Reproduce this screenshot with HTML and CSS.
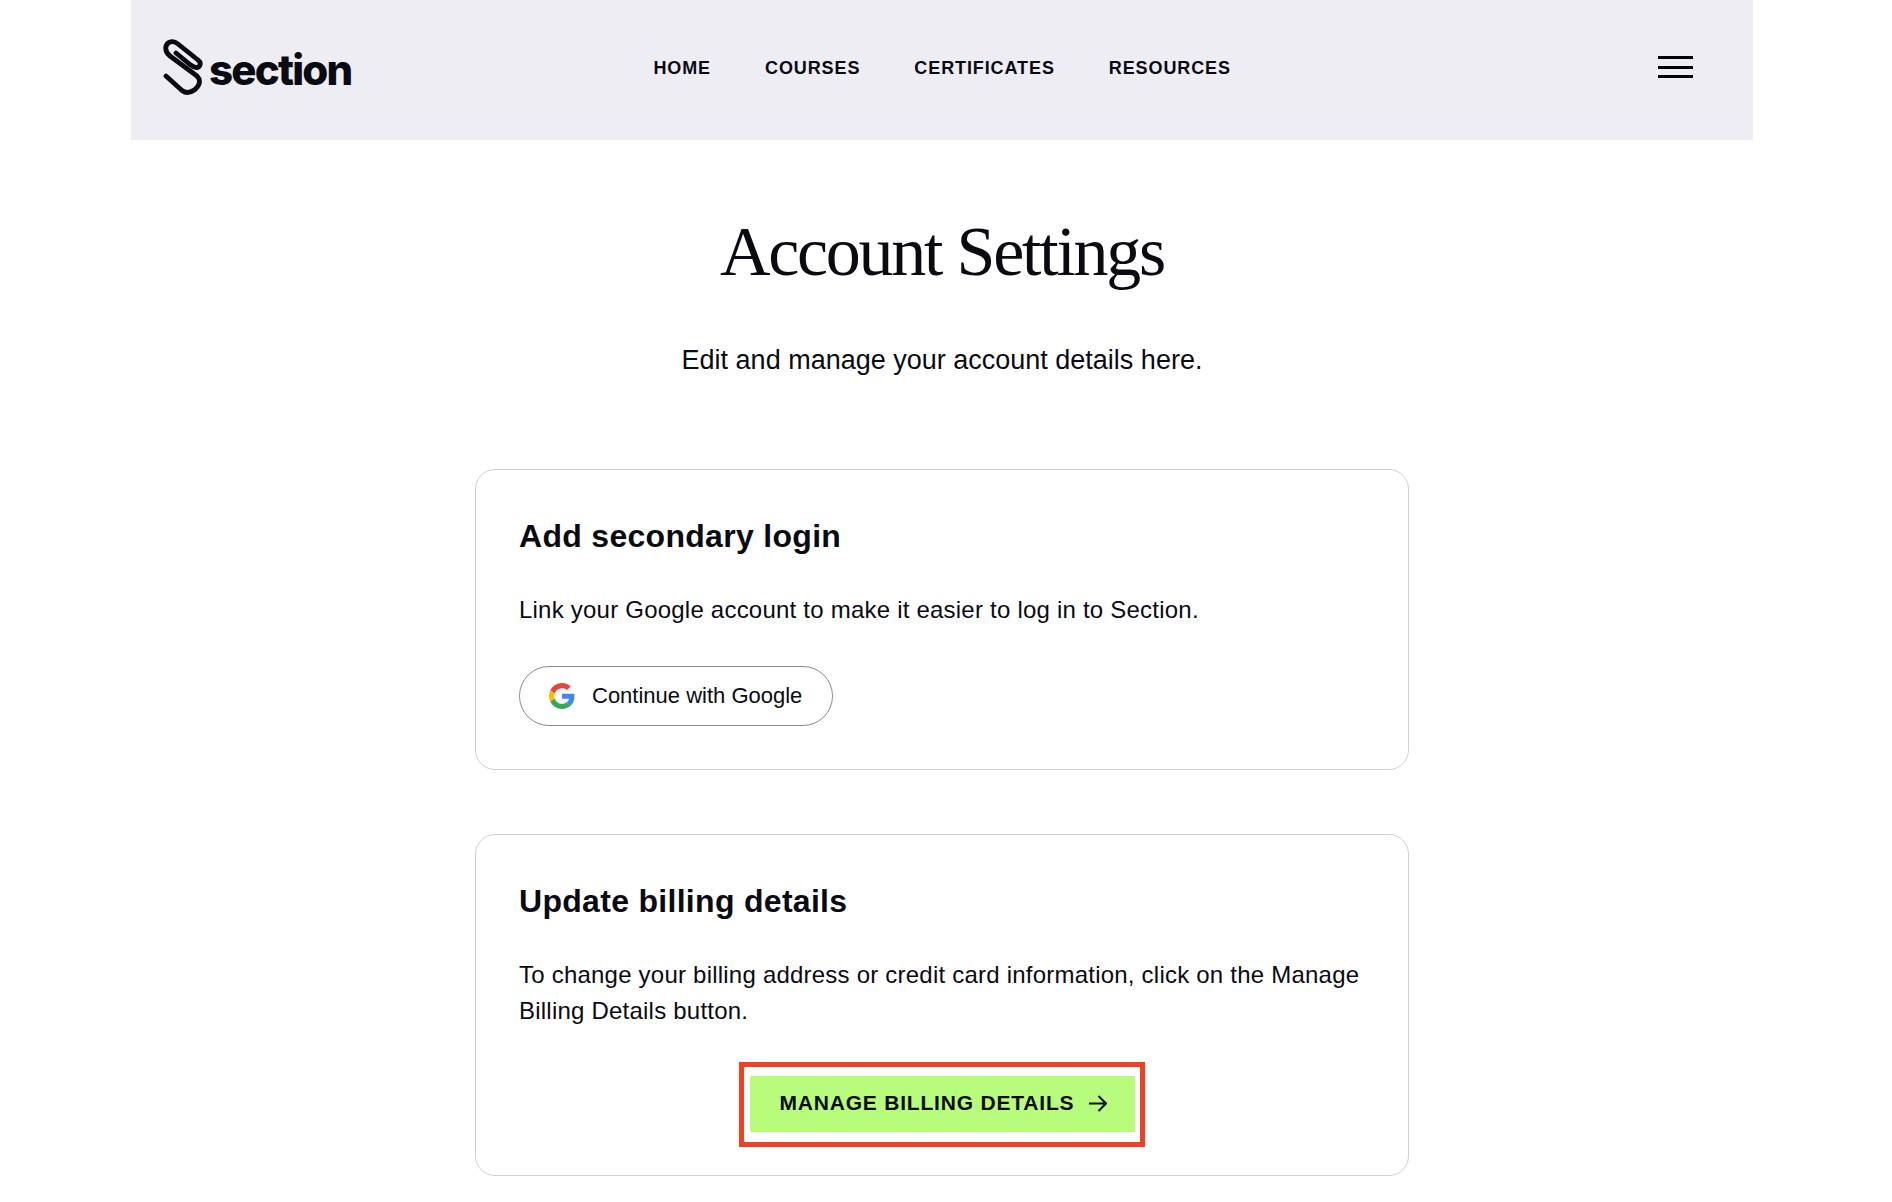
FILE: index.html

```html
<!DOCTYPE html>
<html lang="en">
<head>
  <meta charset="UTF-8">
  <title>Account Settings</title>
  <link rel="stylesheet" href="styles.css">
</head>
<body>

<div class="page">
  <header class="topbar">
    <a class="logo" href="#">
      <svg class="logo-clip" viewBox="6 6 41 58" width="41" height="58" fill="none" stroke="#0a0a12" stroke-width="4.800" stroke-linecap="round" stroke-linejoin="round">
        <path d="M10 44 L26 58.500 C30 61.500 35 60.500 39 57.500 C44 53 45 48 41 44 L14 24 C8 19.500 9 12.500 13 10.500 C16 9 19 9.500 22 12 L42 28 C46 31 44 36 40 35.500 C38 35 36 34 34 32.500 L20 21"/>
      </svg>
      <span class="logo-text">section</span>
    </a>
    <nav class="nav">
      <a href="#">HOME</a>
      <a href="#">COURSES</a>
      <a href="#">CERTIFICATES</a>
      <a href="#">RESOURCES</a>
    </nav>
    <div class="burger"><span></span><span></span><span></span></div>
  </header>

  <main class="content">
    <h1>Account Settings</h1>
    <p class="lead">Edit and manage your account details here.</p>

    <section class="card card-login">
      <h2>Add secondary login</h2>
      <p>Link your Google account to make it easier to log in to Section.</p>
      <button class="google-btn">
        <svg viewBox="0 0 48 48" width="26" height="26">
          <path fill="#EA4335" d="M24 9.500c3.540 0 6.710 1.220 9.210 3.600l6.850-6.850C35.900 2.380 30.470 0 24 0 14.620 0 6.510 5.380 2.560 13.220l7.980 6.190C12.430 13.720 17.740 9.500 24 9.500z"/>
          <path fill="#4285F4" d="M46.980 24.550c0-1.570-.15-3.090-.38-4.550H24v9.020h12.940c-.58 2.960-2.260 5.480-4.780 7.180l7.730 6c4.510-4.180 7.090-10.360 7.090-17.650z"/>
          <path fill="#FBBC05" d="M10.530 28.590c-.48-1.450-.76-2.990-.76-4.590s.27-3.140.76-4.590l-7.980-6.190C.92 16.460 0 20.120 0 24c0 3.880.92 7.540 2.560 10.780l7.970-6.190z"/>
          <path fill="#34A853" d="M24 48c6.480 0 11.930-2.130 15.890-5.810l-7.730-6c-2.150 1.450-4.920 2.300-8.160 2.300-6.260 0-11.570-4.220-13.470-9.910l-7.980 6.190C6.510 42.620 14.620 48 24 48z"/>
        </svg>
        <span>Continue with Google</span>
      </button>
    </section>

    <section class="card card-billing">
      <h2>Update billing details</h2>
      <p>To change your billing address or credit card information, click on the Manage Billing Details button.</p>
      <div class="billing-action">
        <div class="callout">
          <a class="manage-btn" href="#">
            <span>MANAGE BILLING DETAILS</span>
            <svg viewBox="0 0 18 18" width="18" height="18" fill="none" stroke="#0a0a12" stroke-width="2">
              <path d="M0 9.500H17M9.500 2L17 9.500L9.500 17"/>
            </svg>
          </a>
        </div>
      </div>
    </section>
  </main>
</div>

</body>
</html>
```

FILE: styles.css

```css
* {
  box-sizing: border-box;
}
body {
  margin: 0;
  background: #fff;
  color: #0a0a12;
  font-family: 'Liberation Sans', Arial, sans-serif;
}
a {
  color: inherit;
  text-decoration: none;
}
.page {
  width: 1622px;
  margin-left: 131px;
}
.topbar {
  height: 140px;
  background: #eeedf3;
  display: flex;
  align-items: flex-start;
  justify-content: space-between;
  padding: 38px 60px 0 31px;
}
.logo {
  display: flex;
  align-items: flex-start;
  gap: 6px;
}
.logo-text {
  font-family: Inter, sans-serif;
  font-size: 42px;
  font-weight: 800;
  letter-spacing: -1.8px;
  line-height: 50px;
  margin-top: 7px;
}
.nav {
  display: flex;
  gap: 54px;
  font-size: 18px;
  font-weight: 700;
  letter-spacing: 0.9px;
  line-height: 28px;
  margin-top: 16px;
  margin-right: 125px;
}
.burger {
  display: flex;
  flex-direction: column;
  gap: 6.500px;
  width: 35px;
  margin-top: 18px;
}
.burger span {
  display: block;
  height: 3px;
  background: #000;
}
.content {
  display: flex;
  flex-direction: column;
  align-items: center;
}
h1 {
  font-family: 'Liberation Serif', serif;
  font-size: 70px;
  font-weight: 400;
  letter-spacing: -2.25px;
  line-height: 84px;
  margin: 70px 0 0;
}
.lead {
  font-size: 27px;
  line-height: 36px;
  margin: 48px 0 0;
}
.card {
  width: 934px;
  border: 1px solid #cfcfdc;
  border-radius: 20px;
  padding: 46px 40px 0 43px;
}
.card-login {
  height: 301px;
  margin-top: 91px;
}
.card-billing {
  height: 342px;
  margin-top: 64px;
}
h2 {
  font-size: 32px;
  font-weight: 700;
  letter-spacing: 0.3px;
  line-height: 40px;
  margin: 0;
}
.card p {
  font-size: 24px;
  letter-spacing: 0.22px;
  line-height: 36px;
  margin: 36px 0 0;
}
.google-btn {
  display: flex;
  align-items: center;
  gap: 17px;
  width: 314px;
  height: 60px;
  margin-top: 38px;
  padding: 0 0 1px 29px;
  background: #fff;
  border: 1px solid #8a8a8a;
  border-radius: 30px;
  color: #0a0a12;
  font-family: inherit;
  font-size: 22px;
}
.billing-action {
  display: flex;
  justify-content: center;
  margin: 33px 4px 0 0;
}
.callout {
  border: 5px solid #ef4123;
  padding: 9px 5px 10px 6px;
}
.manage-btn {
  display: flex;
  align-items: center;
  gap: 15px;
  width: 385px;
  height: 56px;
  padding: 0 0 3px 30px;
  background: #b7fd7b;
  font-size: 21px;
  font-weight: 700;
  letter-spacing: 0.8px;
}
```
